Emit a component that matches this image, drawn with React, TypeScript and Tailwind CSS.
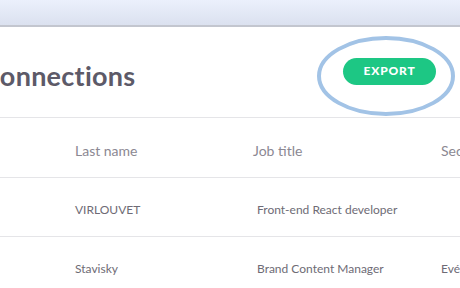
import React from "react";

interface Person {
  lastName: string;
  jobTitle: string;
  sector: string;
}

const people: Person[] = [
  { lastName: "VIRLOUVET", jobTitle: "Front-end React developer", sector: "" },
  { lastName: "Stavisky", jobTitle: "Brand Content Manager", sector: "Evénementiel" },
];

function App() {
  return (
    <div
      className="relative w-[460px] h-[288px] overflow-hidden bg-white text-left"
      style={{ fontFamily: "Lato, 'Open Sans', sans-serif" }}
    >
      {/* top browser bar */}
      <div className="h-[27px] bg-gradient-to-b from-[#ebf0fc] to-[#dbe1ef] border-b-2 border-[#c3c6cf]" />

      {/* page header */}
      <div className="h-[91px] flex items-center justify-between border-b border-[#e5e5e8]">
        <h1 className="ml-[-18px] mt-[8px] text-[27px] font-bold text-[#5d5a68] tracking-[0.01em] whitespace-nowrap">
          Connections
        </h1>
        <button className="mr-[24px] mb-[2px] w-[93px] h-[27px] rounded-full bg-[#1dc784] text-white text-[12px] font-black tracking-[0.07em]">
          EXPORT
        </button>
      </div>

      {/* table head */}
      <div className="h-[60px] pt-[5px] flex items-center border-b border-[#e5e5e8] text-[14px] text-[#8b8892]">
        <div className="w-[75px] shrink-0" />
        <div className="w-[178px] shrink-0">Last name</div>
        <div className="w-[188px] shrink-0">Job title</div>
        <div className="whitespace-nowrap">Sector</div>
      </div>

      {/* rows */}
      {people.map((p) => (
        <div
          key={p.lastName}
          className="h-[59px] pt-[5px] flex items-center border-b border-[#e5e5e8] text-[12px] text-[#6e6b75]"
        >
          <div className="w-[75px] shrink-0" />
          <div className="w-[182px] shrink-0">{p.lastName}</div>
          <div className="w-[184px] shrink-0">{p.jobTitle}</div>
          <div className="whitespace-nowrap">{p.sector}</div>
        </div>
      ))}

      {/* highlight drawn around the button */}
      <svg className="absolute left-0 top-0" width="460" height="288">
        <ellipse cx="386" cy="76" rx="67" ry="38" fill="none" stroke="#a2c3e6" strokeWidth="4" />
      </svg>
    </div>
  );
}

export default App;
